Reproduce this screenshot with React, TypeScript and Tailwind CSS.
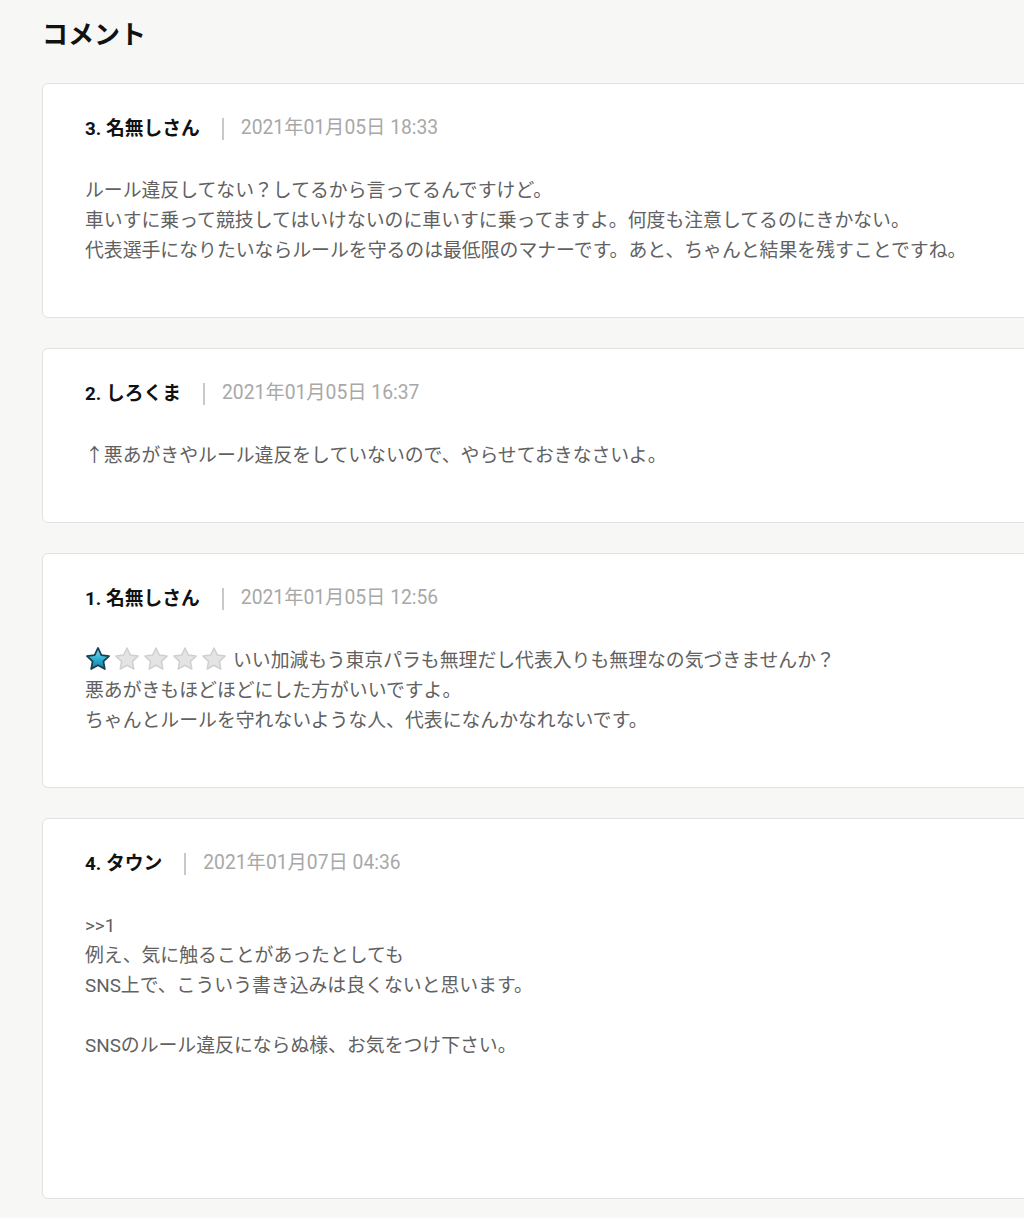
import type { ReactNode } from 'react'

type Comment = {
  no: number
  name: string
  date: string
  lines: string[]
  rating?: number
  minH?: string
}

const comments: Comment[] = [
  {
    no: 3,
    name: '名無しさん',
    date: '2021年01月05日 18:33',
    lines: [
      'ルール違反してない？してるから言ってるんですけど。',
      '車いすに乗って競技してはいけないのに車いすに乗ってますよ。何度も注意してるのにきかない。',
      '代表選手になりたいならルールを守るのは最低限のマナーです。あと、ちゃんと結果を残すことですね。',
    ],
  },
  {
    no: 2,
    name: 'しろくま',
    date: '2021年01月05日 16:37',
    lines: ['↑悪あがきやルール違反をしていないので、やらせておきなさいよ。'],
  },
  {
    no: 1,
    name: '名無しさん',
    date: '2021年01月05日 12:56',
    rating: 1,
    lines: [
      'いい加減もう東京パラも無理だし代表入りも無理なの気づきませんか？',
      '悪あがきもほどほどにした方がいいですよ。',
      'ちゃんとルールを守れないような人、代表になんかなれないです。',
    ],
  },
  {
    no: 4,
    name: 'タウン',
    date: '2021年01月07日 04:36',
    minH: 'min-h-[381px]',
    lines: [
      '>>1',
      '例え、気に触ることがあったとしても',
      'SNS上で、こういう書き込みは良くないと思います。',
      '',
      'SNSのルール違反にならぬ様、お気をつけ下さい。',
    ],
  },
]

const STAR = 'M12 1.8l3.1 6.6 7.1.9-5.2 4.9 1.3 7.1L12 17.8l-6.3 3.5 1.3-7.1L1.8 9.3l7.1-.9z'

function Star({ on }: { on: boolean }) {
  return (
    <svg width="26" height="26" viewBox="0 0 24 24" className="shrink-0">
      <defs>
        <linearGradient id="starOn" x1="0" y1="0" x2="0" y2="1">
          <stop offset="0" stopColor="#8fe3f5" />
          <stop offset="0.5" stopColor="#2fb2d6" />
          <stop offset="1" stopColor="#137a9c" />
        </linearGradient>
      </defs>
      {on ? (
        <path d={STAR} fill="url(#starOn)" stroke="#173f4f" strokeWidth="1.6" strokeLinejoin="round" />
      ) : (
        <path d={STAR} fill="#e4e4e4" stroke="#d0d0d0" strokeWidth="1.4" strokeLinejoin="round" />
      )}
    </svg>
  )
}

function Stars({ value }: { value: number }) {
  return (
    <span className="inline-flex items-center gap-[3px] mr-[6px] align-[-5px]">
      {[1, 2, 3, 4, 5].map((i) => (
        <Star key={i} on={i <= value} />
      ))}
    </span>
  )
}

function Card({ c }: { c: Comment }) {
  const body: ReactNode[] = c.lines.map((line, i) => (
    <p key={i} className="h-[30px] whitespace-nowrap">
      {i === 0 && c.rating ? <Stars value={c.rating} /> : null}
      {line}
    </p>
  ))

  return (
    <div
      className={`w-[1010px] shrink-0 bg-white border-[1.5px] border-[#e2e2e2] rounded-[6px] pl-[42px] pt-[30px] pb-[51px] ${c.minH ?? ''}`}
    >
      <div className="flex items-center h-[30px]">
        <span className="font-bold text-[#111] text-[18.8px]">
          {c.no}. {c.name}
        </span>
        <span className="w-[2px] h-[22px] bg-[#c9c9c9] ml-[22px] mr-[17px]" />
        <span className="text-[#a8a8a8] text-[19.3px] -translate-y-[1px]">{c.date}</span>
      </div>
      <div className="mt-[32px] text-[18.85px] leading-[30px] text-[#616161]">{body}</div>
    </div>
  )
}

export default function App() {
  return (
    <div
      className="min-h-[1218px] bg-[#f7f7f6] overflow-hidden pl-[42px] pt-[17px] pb-[20px]"
      style={{ fontFamily: 'Roboto, "Noto Sans CJK JP", sans-serif' }}
    >
      <h1 className="text-[26px] leading-[36px] font-bold text-[#111]">コメント</h1>
      <div className="mt-[30px] flex flex-col gap-[30px]">
        {comments.map((c) => (
          <Card key={c.no} c={c} />
        ))}
      </div>
    </div>
  )
}
